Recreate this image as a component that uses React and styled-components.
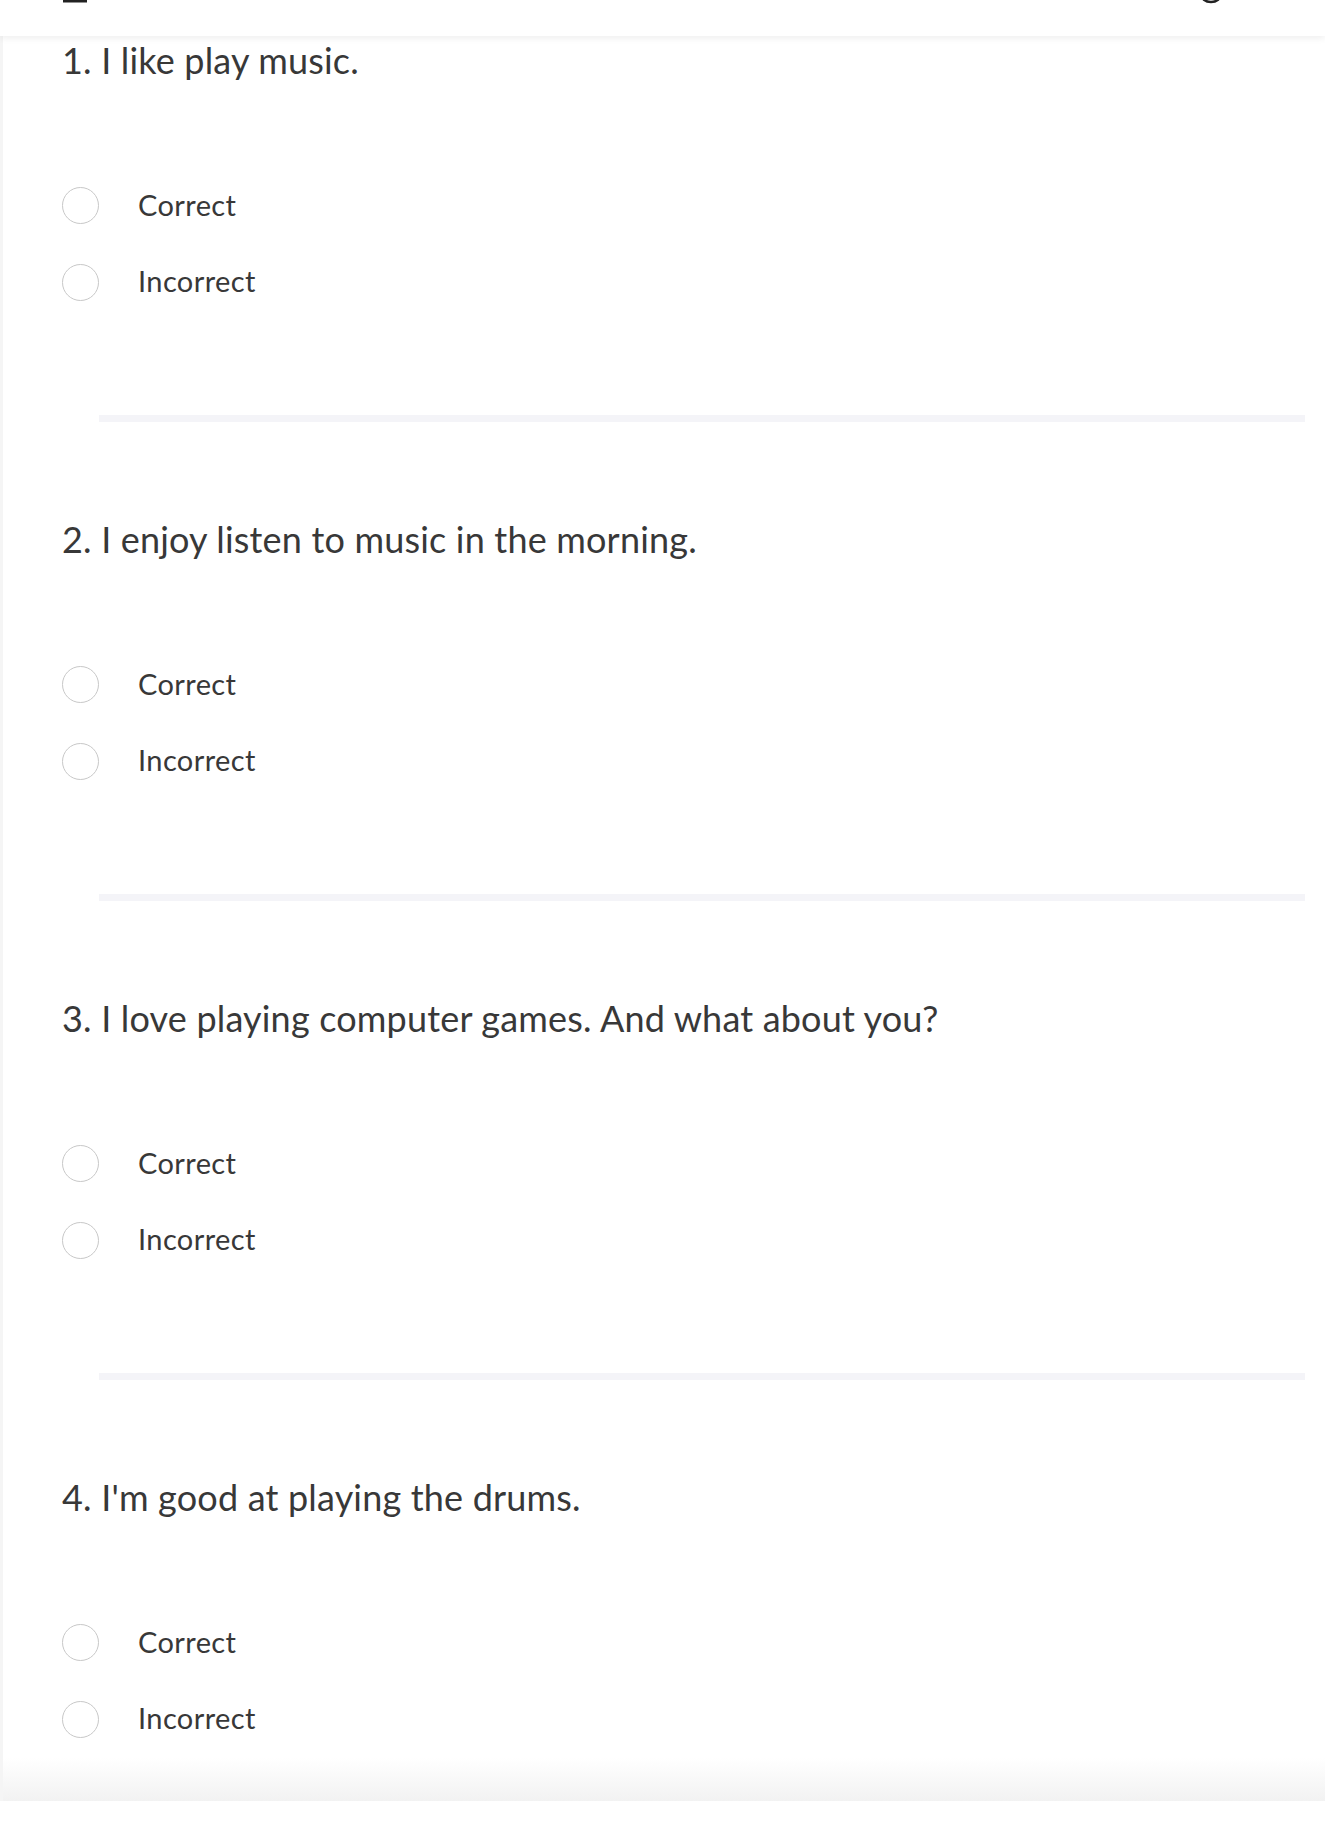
import React from "react";
import styled, { createGlobalStyle } from "styled-components";

const Global = createGlobalStyle`
  html, body { margin: 0; padding: 0; background: #ffffff; }
  body { font-family: Lato, "Open Sans", sans-serif; color: #363636; }
  * { box-sizing: border-box; }
`;

const Page = styled.div`
  display: flex;
  flex-direction: column;
  min-height: 1824px;
  background: #ffffff;
`;

const Header = styled.header`
  position: relative;
  z-index: 2;
  height: 36px;
  background: #ffffff;
  box-shadow: 0 2px 7px rgba(0, 0, 0, 0.07);
  display: flex;
  align-items: flex-start;
  justify-content: space-between;
  padding: 0 100px 0 63px;
  overflow: hidden;
`;

const IconStub = styled.svg`
  display: block;
  flex: none;
`;

const Main = styled.main`
  display: flex;
  flex-direction: column;
  border-left: 3px solid #f5f5f5;
  padding: 1.5px 0 0 59px;
`;

const Question = styled.section`
  display: flex;
  flex-direction: column;
`;

const Title = styled.h2`
  margin: 0;
  font-family: Lato, "Open Sans", sans-serif;
  font-weight: 400;
  font-size: 36px;
  line-height: 44px;
  letter-spacing: 0.18px;
  color: #383838;
`;

const Options = styled.div`
  display: flex;
  flex-direction: column;
  gap: 39.5px;
  margin-top: 105.5px;
`;

const Option = styled.label`
  display: flex;
  align-items: center;
  gap: 39px;
  height: 37px;
  cursor: pointer;
`;

const OptionText = styled.span`
  margin-bottom: 2px;
  font-family: Lato, "Open Sans", sans-serif;
  font-size: 29px;
  line-height: 36px;
  letter-spacing: 0.4px;
  color: #383838;
`;

const Radio = styled.span`
  flex: none;
  width: 37px;
  height: 37px;
  border-radius: 50%;
  border: 1.5px solid #c8c8c8;
  background: #ffffff;
`;

const Divider = styled.hr`
  margin: 114.5px 20px 94.67px 37px;
  height: 7px;
  border: 0;
  background: #f4f4f8;
`;

const FooterFade = styled.div`
  margin: 20.5px 0 0 -59px;
  height: 43px;
  background: linear-gradient(to bottom, rgba(242, 242, 242, 0) 0%, #f2f2f2 100%);
`;

const BottomSpace = styled.div`
  height: 21px;
  background: #ffffff;
`;

const questions = [
  "1. I like play music.",
  "2. I enjoy listen to music in the morning.",
  "3. I love playing computer games. And what about you?",
  "4. I'm good at playing the drums.",
];

export default function App() {
  return (
    <>
      <Global />
      <Page>
        <Header>
          <IconStub width="26" height="8" viewBox="0 0 26 8">
            <rect x="0" y="0" width="24" height="2.5" fill="#222" />
          </IconStub>
          <IconStub width="26" height="8" viewBox="0 0 26 8">
            <path d="M2 -6 A10 8 0 0 0 22 -6" fill="none" stroke="#222" strokeWidth="2.5" />
          </IconStub>
        </Header>
        <Main>
          {questions.map((q, i) => (
            <Question key={q}>
              <Title>{q}</Title>
              <Options>
                <Option>
                  <Radio />
                  <OptionText>Correct</OptionText>
                </Option>
                <Option>
                  <Radio />
                  <OptionText>Incorrect</OptionText>
                </Option>
              </Options>
              {i < questions.length - 1 && <Divider />}
            </Question>
          ))}
          <FooterFade />
        </Main>
        <BottomSpace />
      </Page>
    </>
  );
}
